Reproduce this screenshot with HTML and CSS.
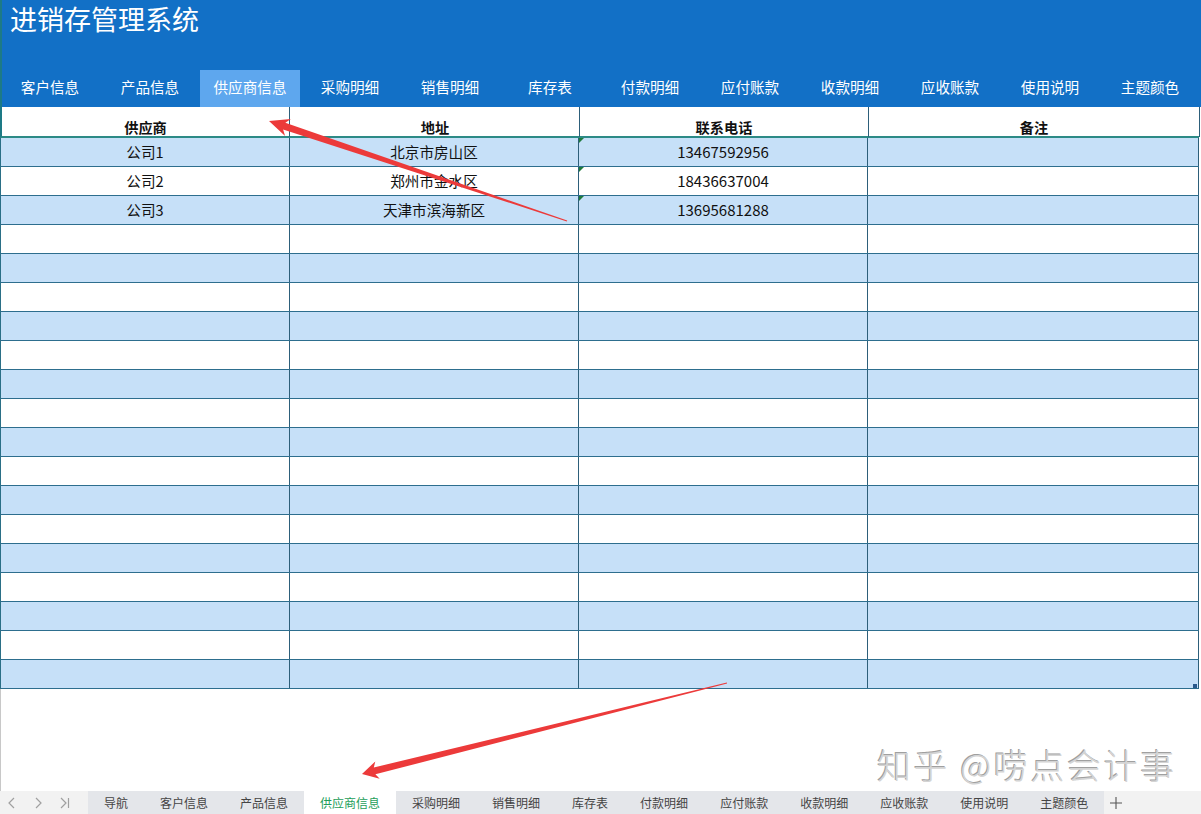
FILE: index.html
```html
<!DOCTYPE html>
<html lang="zh-CN">
<head>
<meta charset="utf-8">
<title>进销存管理系统</title>
<link rel="stylesheet" href="styles.css">
</head>
<body>
<div class="app">
  <header class="header">
    <h1 class="title">进销存管理系统</h1>
    <nav class="tabs">
      <span class="tab">客户信息</span>
      <span class="tab">产品信息</span>
      <span class="tab active">供应商信息</span>
      <span class="tab">采购明细</span>
      <span class="tab">销售明细</span>
      <span class="tab">库存表</span>
      <span class="tab">付款明细</span>
      <span class="tab">应付账款</span>
      <span class="tab">收款明细</span>
      <span class="tab">应收账款</span>
      <span class="tab">使用说明</span>
      <span class="tab">主题颜色</span>
    </nav>
  </header>

  <main class="sheet">
    <div class="grid">
      <div class="row head">
        <div class="cell">供应商</div>
        <div class="cell">地址</div>
        <div class="cell">联系电话</div>
        <div class="cell">备注</div>
      </div>
      <div class="row band"><div class="cell">公司1</div><div class="cell">北京市房山区</div><div class="cell num">13467592956</div><div class="cell"></div></div>
      <div class="row"><div class="cell">公司2</div><div class="cell">郑州市金水区</div><div class="cell num">18436637004</div><div class="cell"></div></div>
      <div class="row band"><div class="cell">公司3</div><div class="cell">天津市滨海新区</div><div class="cell num">13695681288</div><div class="cell"></div></div>
      <div class="row"><div class="cell"></div><div class="cell"></div><div class="cell"></div><div class="cell"></div></div>
      <div class="row band"><div class="cell"></div><div class="cell"></div><div class="cell"></div><div class="cell"></div></div>
      <div class="row"><div class="cell"></div><div class="cell"></div><div class="cell"></div><div class="cell"></div></div>
      <div class="row band"><div class="cell"></div><div class="cell"></div><div class="cell"></div><div class="cell"></div></div>
      <div class="row"><div class="cell"></div><div class="cell"></div><div class="cell"></div><div class="cell"></div></div>
      <div class="row band"><div class="cell"></div><div class="cell"></div><div class="cell"></div><div class="cell"></div></div>
      <div class="row"><div class="cell"></div><div class="cell"></div><div class="cell"></div><div class="cell"></div></div>
      <div class="row band"><div class="cell"></div><div class="cell"></div><div class="cell"></div><div class="cell"></div></div>
      <div class="row"><div class="cell"></div><div class="cell"></div><div class="cell"></div><div class="cell"></div></div>
      <div class="row band"><div class="cell"></div><div class="cell"></div><div class="cell"></div><div class="cell"></div></div>
      <div class="row"><div class="cell"></div><div class="cell"></div><div class="cell"></div><div class="cell"></div></div>
      <div class="row band"><div class="cell"></div><div class="cell"></div><div class="cell"></div><div class="cell"></div></div>
      <div class="row"><div class="cell"></div><div class="cell"></div><div class="cell"></div><div class="cell"></div></div>
      <div class="row band"><div class="cell"></div><div class="cell"></div><div class="cell"></div><div class="cell"></div></div>
      <div class="row"><div class="cell"></div><div class="cell"></div><div class="cell"></div><div class="cell"></div></div>
      <div class="row band last"><div class="cell"></div><div class="cell"></div><div class="cell"></div><div class="cell"></div></div>
    </div>
    <div class="watermark">知乎 @唠点会计事</div>
  </main>

  <footer class="sheetbar">
    <div class="navs">
      <svg width="12" height="12" viewBox="0 0 12 12"><path d="M8 1 L3 6 L8 11" fill="none" stroke="#a0a0a0" stroke-width="1.2"/></svg>
      <svg width="12" height="12" viewBox="0 0 12 12"><path d="M4 1 L9 6 L4 11" fill="none" stroke="#a0a0a0" stroke-width="1.2"/></svg>
      <svg width="12" height="12" viewBox="0 0 12 12"><path d="M3 1 L8 6 L3 11 M10.5 1 V11" fill="none" stroke="#a0a0a0" stroke-width="1.2"/></svg>
    </div>
    <div class="stabs">
      <span class="stab">导航</span>
      <span class="stab">客户信息</span>
      <span class="stab">产品信息</span>
      <span class="stab active">供应商信息</span>
      <span class="stab">采购明细</span>
      <span class="stab">销售明细</span>
      <span class="stab">库存表</span>
      <span class="stab">付款明细</span>
      <span class="stab">应付账款</span>
      <span class="stab">收款明细</span>
      <span class="stab">应收账款</span>
      <span class="stab">使用说明</span>
      <span class="stab">主题颜色</span>
    </div>
    <div class="add">
      <svg width="14" height="14" viewBox="0 0 14 14"><path d="M7 1 V13 M1 7 H13" stroke="#555" stroke-width="1.1"/></svg>
    </div>
  </footer>

  <svg class="arrows" width="1201" height="814" viewBox="0 0 1201 814">
    <polygon fill="#ec3a3a" points="269,121 290.9,118.9 285.3,122.8 567.2,220.6 566.8,221.4 283.1,129.4 285.1,135.9"/>
    <polygon fill="#ec3a3a" points="362,774 375.3,761.4 373.8,767.5 726.9,682.5 727.1,683.5 375.4,774.3 379.7,778.8"/>
  </svg>
</div>
</body>
</html>
```

FILE: styles.css
```css
* { box-sizing: border-box; }
html, body { margin: 0; padding: 0; }
body {
  width: 1201px;
  height: 814px;
  overflow: hidden;
  background: #fff;
  font-family: "Noto Sans CJK SC", "Noto Sans", sans-serif;
  color: #111;
}
.app {
  position: relative;
  width: 1201px;
  height: 814px;
  display: flex;
  flex-direction: column;
}
.header {
  height: 107px;
  background: #1270c6;
  border-left: 2px solid #1d7a86;
  display: flex;
  flex-direction: column;
}
.title {
  margin: 0;
  padding: 3px 0 0 8px;
  font-size: 27px;
  line-height: 32px;
  font-weight: 400;
  color: #fff;
}
.tabs {
  margin-top: auto;
  height: 37px;
  display: flex;
  margin-left: -2px;
}
.tab {
  width: 100px;
  display: flex;
  align-items: center;
  justify-content: center;
  color: #fff;
  font-size: 14.6px;
  padding-bottom: 4px;
}
.tab.active { background: #5ea7ee; }

.sheet {
  position: relative;
  flex: 1;
  border-left: 1px solid #c8c8c8;
}
.grid {
  width: 1199px;
  margin-left: -1px;
}
.row {
  display: grid;
  grid-template-columns: 289px 289px 289px 331px;
  height: 29px;
  border-left: 1px solid #2a6f86;
  border-bottom: 1px solid #2d6e8e;
}
.row.band { background: #c6e0f8; }
.row.head {
  height: 31px;
  border-bottom: 2px solid #2c8a86;
  border-left: 2px solid #1d7a86;
}
.cell {
  border-right: 1px solid #2d5f7a;
  display: flex;
  align-items: center;
  justify-content: center;
  font-size: 14.6px;
  padding-bottom: 1px;
  position: relative;
}
.head .cell {
  font-weight: 700;
  font-size: 14.2px;
  padding-top: 10px;
  padding-bottom: 0;
}
.row.head .cell:first-child { width: 288px; }
.num { font-size: 15px; }
.num::before {
  content: "";
  position: absolute;
  left: 0;
  top: 0;
  border-top: 5px solid #1e7a3c;
  border-right: 5px solid transparent;
}
.row.last .cell:last-child::after {
  content: "";
  position: absolute;
  right: 1px;
  bottom: 0;
  width: 4px;
  height: 4px;
  background: #2b5a8c;
}
.watermark {
  position: absolute;
  left: 876px;
  top: 638px;
  font-size: 34px;
  line-height: 40px;
  letter-spacing: 2.6px;
  font-weight: 300;
  color: #d4d4d4;
  text-shadow: -1px -1px 0 #a0a0a0, 1px 1px 0 #ffffff;
  white-space: nowrap;
}

.sheetbar {
  height: 23px;
  display: flex;
  background: #f2f2f2;
  font-size: 12px;
  color: #444;
}
.navs {
  width: 88px;
  display: flex;
  align-items: center;
  gap: 14px;
  padding-left: 6px;
}
.stabs {
  display: flex;
  background: #e4e6ea;
}
.stab {
  padding: 0 16px;
  display: flex;
  align-items: center;
  white-space: nowrap;
}
.stab.active {
  background: #fff;
  color: #1e9e5a;
}
.add {
  display: flex;
  align-items: center;
  padding-left: 5px;
}
.arrows {
  position: absolute;
  left: 0;
  top: 0;
  pointer-events: none;
}
```
